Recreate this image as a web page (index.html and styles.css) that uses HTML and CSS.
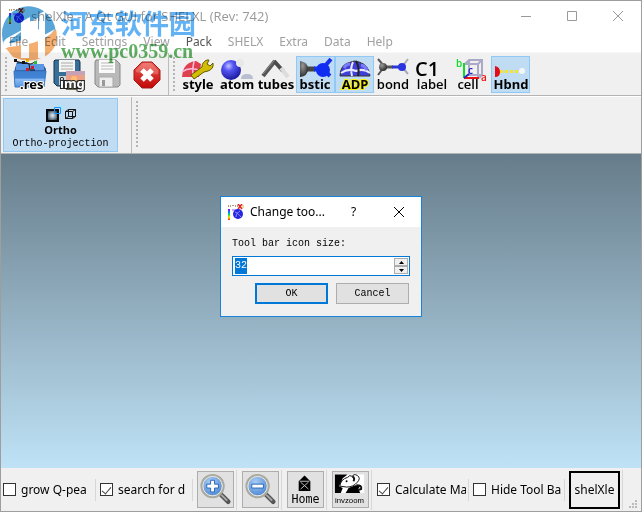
FILE: index.html
```html
<!DOCTYPE html>
<html lang="en">
<head>
<meta charset="utf-8">
<title>shelXle - A Qt GUI for SHELXL (Rev: 742)</title>
<link rel="stylesheet" href="styles.css">
</head>
<body>
<svg class="defs" width="0" height="0" aria-hidden="true">
  <defs>
    <linearGradient id="folder" x2="0" y2="1"><stop offset="0" stop-color="#3f7fd0"/><stop offset=".45" stop-color="#4384d6"/><stop offset=".5" stop-color="#8bbcf4"/><stop offset="1" stop-color="#5796e2"/></linearGradient>
    <linearGradient id="red" x2="0" y2="1"><stop offset="0" stop-color="#ee5a52"/><stop offset="1" stop-color="#c00808"/></linearGradient>
    <radialGradient id="blue" cx=".38" cy=".3" r=".7"><stop offset="0" stop-color="#c4c4ff"/><stop offset=".35" stop-color="#5555f4"/><stop offset="1" stop-color="#1b1ba0"/></radialGradient>
    <radialGradient id="grey" cx=".35" cy=".3" r=".8"><stop offset="0" stop-color="#999"/><stop offset="1" stop-color="#222"/></radialGradient>
    <radialGradient id="lens" cx=".4" cy=".3" r=".8"><stop offset="0" stop-color="#a7cbf5"/><stop offset="1" stop-color="#3f7ed0"/></radialGradient>
    <linearGradient id="rainbow" x2="0" y2="1"><stop offset="0" stop-color="#80f"/><stop offset=".3" stop-color="#08f"/><stop offset=".5" stop-color="#0d5"/><stop offset=".75" stop-color="#fd0"/><stop offset="1" stop-color="#f20"/></linearGradient>
    <radialGradient id="square"><stop offset="0" stop-color="#d7e9f5"/><stop offset=".4" stop-color="#a3b6c4"/><stop offset="1" stop-color="#3a4650"/></radialGradient>
    <symbol id="app" viewBox="0 0 16 16">
      <path d="M0 2h4M5 1v2M7 2h3" stroke="#b59b72" stroke-width="2" stroke-dasharray="1 1"/>
      <path d="M10 0l4 5M14 0l-4 5" stroke="#e32020" stroke-width="1.5"/><path d="M15 1v3" stroke="#d5b322"/>
      <path d="M0 5h2v11H0z" fill="url(#rainbow)"/>
      <path d="M4 6h3v5l3 4" stroke="#c8a8ff" stroke-width="2" fill="none"/>
      <circle cx="10" cy="10" r="5" fill="#2626e0"/><path d="M7 8c3 1 4 3 6 5M8 13c0-3 2-5 4-6" fill="none" stroke="#8f90ff"/>
    </symbol>
  </defs>
</svg>
<div class="window">
  <header class="titlebar">
    <svg class="app-icon" aria-hidden="true"><use href="#app"/></svg>
    <h1>shelXle - A Qt GUI for SHELXL (Rev: 742)</h1>
    <div class="caption-buttons">
      <button aria-label="Minimize"><svg width="12" height="12" viewBox="0 0 12 12"><path d="M1 6.500h10"/></svg></button>
      <button aria-label="Maximize"><svg width="12" height="12" viewBox="0 0 12 12"><path d="M1.500 1.500h9v9h-9z"/></svg></button>
      <button aria-label="Close"><svg width="12" height="12" viewBox="0 0 12 12"><path d="M1 1l10 10M11 1L1 11"/></svg></button>
    </div>
  </header>
  <nav class="menubar">
    <a href="#">File</a><a href="#">Edit</a><a href="#">Settings</a><a href="#">View</a><a href="#" class="enabled">Pack</a><a href="#">SHELX</a><a href="#">Extra</a><a href="#">Data</a><a href="#">Help</a>
  </nav>

  <div class="toolbar">
    <div class="group">
      <span class="handle"></span>
      <button class="tool" aria-label="Open res file"><svg viewBox="0 0 39 37">
        <path d="M4 12l2-6h10l2 2h14l3 5v6H3z" fill="#315f9f"/><path d="M5 8h28v6H5z" fill="#5a98e4"/>
        <path d="M3 15h32l-2 16H4z" fill="url(#folder)" stroke="#3b77c2"/>
        <path d="M4 5l8 2 8 1 6-3M18 8l1 6h5" fill="none" stroke="#111"/><path d="M3 3h3v3H3zM11 5h3v3h-3z" fill="#111"/><path d="M15 3h3v3h-3z" fill="#eed100"/><path d="M23 5h3v3h-3z" fill="#2bbd37"/><path d="M15 12h3v3h-3zM20 10h3v3h-3z" fill="#d81820"/>
        <text x="9" y="33" class="outlined dark">.res</text></svg></button>
      <button class="tool" aria-label="Save image"><svg viewBox="0 0 39 37">
        <path d="M5 4h24l1 2v24H7l-3-3V5z" fill="#376f98" stroke="#17344b"/><path d="M9 4h16v12H9z" fill="#f5f5f3"/><path d="M11 7h12M11 10h12M11 13h12" stroke="#aaa"/><path d="M9 20h14v9H9z" fill="#ccd5db"/>
        <path d="M16 15h19v11H16z" fill="#e9a086"/><path d="M16 15h19v4H16z" fill="#c7a1b4"/><path d="M16 24h19v10H16z" fill="#746b50"/><circle cx="24" cy="23" r="3" fill="#ffbd70"/>
        <text x="10" y="32" class="outlined light">img</text></svg></button>
      <button class="tool" aria-label="Save" disabled><svg viewBox="0 0 39 37">
        <path d="M7 4h20l4 4v21l-2 2H9l-3-3V6z" fill="#b9b9b9" stroke="#888"/><path d="M10 4h16v13H10z" fill="#fafafa"/><path d="M12 7h12M12 10h12M12 13h12" stroke="#b8b8b8"/><path d="M10 21h14v10H10z" fill="#eee" stroke="#aaa"/><path d="M13 24h3v6h-3z" fill="#999"/></svg></button>
      <button class="tool" aria-label="Stop"><svg viewBox="0 0 39 37">
        <path d="M14 6h10l8 8v10l-8 8H14l-8-8V14z" fill="url(#red)" stroke="#a51a17"/><path d="M15 7h8l7 7v4q-12 1-22-2v-2z" fill="#fff" opacity=".2"/><path d="M14 14l10 10M24 14L14 24" stroke="#fff" stroke-width="5"/></svg></button>
    </div>
    <div class="group">
      <span class="handle"></span>
      <button class="tool" aria-label="Style"><svg viewBox="0 0 39 37">
        <path d="M3 21Q4 6 17 5l5 3-2 13z" fill="#df4050"/><path d="M3 16Q11 10 22 15M15 5q-2 8-1 15" fill="none" stroke="#fbd" stroke-width="1.5"/>
        <path d="M12 19l11-8q0-5 5-7h2l-2 4 3 2 3-3q1 6-5 8l-4 1-10 7z" fill="#d2bd05" stroke="#645900"/>
        <text x="19" y="33" text-anchor="middle">style</text></svg></button>
      <button class="tool" aria-label="Atom"><svg viewBox="0 0 39 37">
        <circle cx="13" cy="14" r="10" fill="url(#blue)"/><circle cx="22" cy="7" r="4" fill="#e8e8e8"/><path d="M23 23q0-5 6-5t6 5z" fill="#b9bed0"/>
        <text x="19" y="33" text-anchor="middle">atom</text></svg></button>
      <button class="tool" aria-label="Tubes"><svg viewBox="0 0 39 37">
        <path d="M6 20L18 5" stroke="#555" stroke-width="4"/><path d="M17 5l9 10" stroke="#4b4b4b" stroke-width="4"/><path d="M24 12l7 9" stroke="#dcdcdc" stroke-width="4"/><path d="M6 18L17 5" stroke="#888"/>
        <text x="19" y="33" text-anchor="middle">tubes</text></svg></button>
      <button class="tool on" aria-label="Ball and stick"><svg viewBox="0 0 39 37">
        <path d="M8 13h11" stroke="#454545" stroke-width="5"/><path d="M18 13h11" stroke="#1530ed" stroke-width="5"/><path d="M29 10l6-7M29 15l5 5" stroke="#1530ed" stroke-width="4"/><path d="M4 5q8 1 8 8t-8 8z" fill="url(#grey)"/><circle cx="27" cy="14" r="7" fill="#102cf0"/>
        <text x="19" y="33" text-anchor="middle">bstic</text></svg></button>
      <button class="tool on" aria-label="ADP"><svg viewBox="0 0 39 37">
        <path d="M5 20Q5 8 16 6q3-2 8 0 10 3 11 14z" fill="#3f3fd8" stroke="#333"/><path d="M6 17q7-5 15-2 8-3 14 2M18 6q-3 6-1 14" fill="none" stroke="#e8e8ff" stroke-width="2"/><path d="M21 5q4 7 2 15" fill="none" stroke="#222" stroke-width="2"/><path d="M9 12q2-4 6-4M26 9q4 1 6 5" fill="none" stroke="#7b7bff" stroke-width="3"/>
        <text x="20" y="33" text-anchor="middle" class="yellow">ADP</text></svg></button>
      <button class="tool" aria-label="Bond"><svg viewBox="0 0 39 37">
        <path d="M4 3l6 7M4 19l6-8" stroke="#555" stroke-width="2"/><path d="M10 11h9" stroke="#555" stroke-width="3"/><path d="M18 11h12" stroke="#2838d8" stroke-width="3"/><path d="M28 11l6-8M29 12l5 6" stroke="#aab" stroke-width="2"/><circle cx="9" cy="11" r="4" fill="url(#grey)"/><circle cx="28" cy="11" r="4" fill="#2a35e0"/>
        <text x="19" y="33" text-anchor="middle" class="medium">bond</text></svg></button>
      <button class="tool" aria-label="Label"><svg viewBox="0 0 39 37">
        <text x="2" y="20" class="large">C1</text><text x="19" y="33" text-anchor="middle" class="medium">label</text></svg></button>
      <button class="tool" aria-label="Cell"><svg viewBox="0 0 39 37">
        <path d="M13 8l4-4h13v15l-3 3M17 4v15h13M26 8l4-4M13 8h13v14" fill="none" stroke="#aaaac8" stroke-width="2"/><path d="M12 7v15" stroke="#0cdc27" stroke-width="2"/><path d="M12 22h15" stroke="#e11" stroke-width="2"/><path d="M12 22l5-4" stroke="#22c" stroke-width="2"/>
        <text x="4" y="11" class="axis green">b</text><text x="16" y="18" class="axis blue">c</text><text x="29" y="25" class="axis red">a</text><text x="16" y="33" text-anchor="middle" class="medium">cell</text></svg></button>
      <button class="tool on" aria-label="Hydrogen bond"><svg viewBox="0 0 39 37">
        <path d="M4 10q5 1 5 6t-5 5z" fill="#e30c18"/><path d="M9 15.500h19" stroke="#f4e52a" stroke-width="3" stroke-dasharray="3 2"/><circle cx="31" cy="15" r="3" fill="#f4f6fb"/>
        <text x="20" y="33" text-anchor="middle">Hbnd</text></svg></button>
    </div>
  </div>

  <div class="toolbar second">
    <div class="projection">
      <button class="ortho">
        <svg width="32" height="18" viewBox="0 0 32 18" aria-hidden="true"><path d="M13 1h4v3" fill="none" stroke="#8df1ff"/><path d="M2 5h11v11H2z" fill="url(#square)" stroke="#05080b" stroke-width="2"/><path d="M9.500 2.500h6v6h-3" fill="none" stroke="#1893ff"/><path d="M9.500 2.500v6h4" fill="none" stroke="#1893ff"/><path d="M20.500 6.500h7v7h-7zM20.500 6.500l3-2h7v7l-3 2M27.500 6.500l3-2M23.500 4.500v7h7M23.500 11.500l-3 2" fill="none" stroke="#111"/></svg>
        <b>Ortho</b><span>Ortho-projection</span>
      </button>
    </div>
    <div class="rest"><span class="handle"></span></div>
  </div>

  <main class="canvas">
    <section class="dialog" role="dialog" aria-labelledby="dialog-title">
      <div class="dialog-title">
        <svg class="app-icon" aria-hidden="true"><use href="#app"/></svg>
        <h2 id="dialog-title">Change too...</h2>
        <button aria-label="Help">?</button>
        <button aria-label="Close dialog"><svg width="12" height="12" viewBox="0 0 12 12"><path d="M1 1l10 10M11 1L1 11"/></svg></button>
      </div>
      <form class="dialog-body">
        <label for="size">Tool bar icon size:</label>
        <div class="spin">
          <input id="size" type="text" inputmode="numeric" value="32">
          <div class="steps">
            <button type="button" aria-label="Increase"><svg width="5" height="3" viewBox="0 0 5 3"><path d="M0 3l2.500-3L5 3z"/></svg></button>
            <button type="button" aria-label="Decrease"><svg width="5" height="3" viewBox="0 0 5 3"><path d="M0 0h5L2.500 3z"/></svg></button>
          </div>
        </div>
        <div class="actions"><button type="button" class="default">OK</button><button type="button">Cancel</button></div>
      </form>
    </section>
  </main>

  <footer class="statusbar">
    <label class="cell"><input type="checkbox"><span>grow Q-pea</span></label>
    <label class="cell"><input type="checkbox" checked><span>search for d</span></label>
    <div class="cell tall"><button class="view" aria-label="Zoom in"><svg viewBox="0 0 36 35"><path d="M23 22l8 8" stroke="#555" stroke-width="5" stroke-linecap="round"/><path d="M24 23l6 6" stroke="#aaa" stroke-width="2"/><circle cx="15" cy="14" r="11" fill="url(#lens)" stroke="#aaa99f" stroke-width="3"/><circle cx="15" cy="14" r="10" fill="none" stroke="#e9eeee"/><path d="M13 8h4v4h4v4h-4v4h-4v-4H9v-4h4z" fill="#fff" stroke="#2868b4"/></svg></button></div>
    <div class="cell tall"><button class="view" aria-label="Zoom out"><svg viewBox="0 0 36 35"><path d="M23 22l8 8" stroke="#555" stroke-width="5" stroke-linecap="round"/><path d="M24 23l6 6" stroke="#aaa" stroke-width="2"/><circle cx="15" cy="14" r="11" fill="url(#lens)" stroke="#aaa99f" stroke-width="3"/><circle cx="15" cy="14" r="10" fill="none" stroke="#e9eeee"/><path d="M9 12h12v4H9z" fill="#fff" stroke="#2868b4"/></svg></button></div>
    <div class="cell tall"><button class="view" aria-label="Home"><svg viewBox="0 0 36 35"><path d="M11 9l6-6 6 6v10H11z"/><path d="M13 10l8 7M21 10l-8 7M12 9h10" stroke="#bbb" fill="none"/><text x="18" y="31" text-anchor="middle" class="home">Home</text></svg></button></div>
    <div class="cell tall"><button class="view" aria-label="Invert zoom"><svg viewBox="0 0 36 35"><path d="M2 2h30v19H2z" fill="#fff"/><path d="M2 2h13l-5 4-2 5-2 3 4 2-2 5H2zM13 21l3-5 7-3 5 1-2 3 2 4z"/><path d="M7 14q1-7 8-9 2-3 5-1 1-3 5-1 4 3 0 7-4 5-11 5z" fill="#fff" stroke="#111"/><circle cx="14" cy="9" r="1"/><path d="M20 4q3 2 1 5M24 13q6 0 5 4l-3 1" fill="none" stroke="#111" stroke-width="2"/><text x="17" y="31" text-anchor="middle" class="inv">invzoom</text></svg></button></div>
    <label class="cell wide"><input type="checkbox" checked><span>Calculate Ma</span></label>
    <label class="cell wide"><input type="checkbox"><span>Hide Tool Ba</span></label>
    <div class="cell tall"><button class="brand">shelXle</button></div>
    <svg class="grip" width="9" height="9" viewBox="0 0 9 9" aria-hidden="true"><path d="M6 0h2v2H6zM3 3h2v2H3zM6 3h2v2H6zM0 6h2v2H0zM3 6h2v2H3zM6 6h2v2H6z" fill="#bbb"/></svg>
  </footer>
</div>

<div class="watermark">
  <svg width="56" height="56" viewBox="0 0 56 56" aria-hidden="true">
    <path d="M4 43Q-4 22 9 8Q24-5 41 4Q54 12 55 27Q50 33 37 35V12l-9 4v16L8 38Q5 40 4 43z" fill="#2f8fcf"/>
    <path d="M55 23Q59 42 43 51Q28 58 12 51L3 40l17-5v16h8V36l9-3v19h7V33z" fill="#f09a4c"/>
    <path d="M20 16l9-5v17l9-5V8l6-3v47h-7V33l-9 3v16h-8z" fill="#fff"/>
    <path d="M3 43Q0 34 8 31L30 19Q9 33 8 37q20 2 46-14Q44 38 8 41z" fill="#fff"/>
  </svg>
  <div><strong>河东软件园</strong><em>www.pc0359.cn</em></div>
</div>
<script src="script.js"></script>
</body>
</html>
```
FILE: styles.css
```css
* { box-sizing: border-box; }
body { margin: 0; font: 12px/16px "Noto Sans", "Open Sans", sans-serif; color: #000; }
button, input { font: inherit; color: inherit; margin: 0; padding: 0; border-radius: 0; }
button { background: none; border: 0; display: grid; place-items: center; }
h1, h2 { margin: 0; font-weight: 400; white-space: nowrap; }
.defs { position: absolute; }
.window { display: flex; flex-direction: column; min-height: 100vh; border: 1px solid #9e9e9e; background: #f0f0f0; }
.app-icon { width: 16px; height: 16px; flex: none; }

.titlebar { display: flex; align-items: center; height: 30px; padding-left: 8px; background: #fff; color: #999; }
.titlebar h1 { flex: 1; padding-left: 6px; font: 13px/16px "Open Sans", sans-serif; }
.caption-buttons { display: flex; }
.caption-buttons button { width: 46px; height: 30px; }
.caption-buttons path { fill: none; stroke: #999; }

.menubar { display: flex; height: 22px; background: #fff; align-items: center; border-bottom: 1px solid #f7f7f7; }
.menubar a { padding: 0 8px; color: #a0a0a0; text-decoration: none; }
.menubar .enabled { color: #555; }

.toolbar { display: flex; height: 43px; border-bottom: 1px solid #b4b4b4; }
.group { display: flex; align-items: center; padding: 0 1px 0 4px; }
.group:first-child { border-right: 1px solid #bbb; }
.handle { width: 3px; align-self: stretch; margin: 4px 3px 4px 0; background: radial-gradient(circle at 1px 1px, #b4b4b4 1px, transparent 1px) 0 0 / 3px 4px; }
.tool { width: 39px; height: 37px; border: 1px solid transparent; }
.tool.on, .ortho { background: #c0dcf3; border: 1px solid #90c8f6; }
.tool svg { display: block; width: 39px; height: 37px; margin: -1px; }
.tool text { font: 700 13px "Noto Sans", sans-serif; }
.tool .medium { font: 600 13px "Open Sans", sans-serif; }
.tool .large { font: 600 20px "Open Sans", sans-serif; }
.tool .axis { font: 600 10px "Open Sans", sans-serif; }
.outlined { paint-order: stroke; stroke-width: 2px; }
.dark { stroke: #fff; }
.light { fill: #fff; stroke: #222; }
.yellow { paint-order: stroke; stroke: #fff200; stroke-width: 2px; }
.green { fill: #0cdc27; }
.blue { fill: #22c; }
.red { fill: #e11; }

.second { height: 58px; border-top: 1px solid #fff; }
.projection { width: 131px; padding: 1px 2px 2px; border-right: 1px solid #bbb; }
.ortho { width: 115px; height: 54px; align-content: center; padding-top: 4px; }
.ortho b { font: 700 11px/14px "Open Sans", sans-serif; }
.ortho span { font: 10px/13px "Liberation Mono", monospace; }
.rest { display: flex; padding-left: 4px; }

.canvas { flex: 1; position: relative; background: linear-gradient(#667c8a, #bfe2f6); }
.dialog { position: absolute; top: 42px; left: 50%; transform: translateX(-50%); width: 202px; border: 1px solid #1883d7; background: #f0f0f0; }
.dialog-title { display: flex; align-items: center; height: 30px; padding-left: 7px; background: #fff; }
.dialog-title h2 { flex: 1; padding-left: 6px; font-size: 12px; }
.dialog-title button { width: 45px; height: 30px; }
.dialog-title path { stroke: #000; fill: none; }
.dialog-body { padding: 9px 12px 12px 11px; font: 10px/16px "Liberation Mono", monospace; }
.dialog-body label { display: block; }
.spin { display: flex; height: 20px; margin: 4px -1px 7px 0; padding: 1px; border: 1px solid #0078d7; background: #fff; }
.spin input { flex: 1; min-width: 0; border: 0; outline: 0; background: none; padding: 0 1px; }
.spin input::selection { background: #0078d7; color: #fff; }
.steps { display: grid; width: 14px; }
.steps button { border: 1px solid #acacac; background: #f0f0f0; }
.steps svg { display: block; }
.actions { display: flex; justify-content: flex-end; gap: 8px; }
.actions button { width: 73px; height: 21px; border: 1px solid #adadad; background: #e1e1e1; }
.actions .default { border: 2px solid #0078d7; }

.statusbar { display: flex; align-items: center; height: 43px; padding-left: 2px; }
.cell { display: flex; align-items: center; flex: 0 0 93px; gap: 5px; height: 22px; padding-right: 2px; margin-right: 4px; border-right: 1px solid #d7d7d7; min-width: 0; }
.cell.wide { flex-basis: 92px; }
.cell.tall { flex: none; height: 40px; margin-right: 5px; }
.cell span { overflow: hidden; white-space: nowrap; }
.cell input { appearance: none; flex: none; width: 13px; height: 13px; border: 1px solid #333; background: #fff; display: grid; place-items: center; }
.cell input:checked::after { content: ""; width: 4px; height: 8px; border: solid #444; border-width: 0 1px 1px 0; transform: rotate(40deg); }
.view { width: 37px; height: 37px; border: 1px solid #adadad; background: #e1e1e1; }
.view svg { display: block; width: 35px; height: 35px; }
.home { font: 12px "DejaVu Sans Mono", monospace; }
.inv { font: 8px "Liberation Sans", sans-serif; }
.brand { width: 51px; height: 38px; border: 2px solid #000; }
.grip { align-self: flex-end; margin: 0 3px 2px auto; }

.watermark { position: absolute; top: 6px; left: 1px; display: flex; gap: 4px; pointer-events: none; opacity: .8; mix-blend-mode: multiply; }
.watermark strong { display: block; font: 700 27px/34px "Noto Sans CJK SC", sans-serif; color: #3a9ff2; }
.watermark em { display: block; font: 700 20px/22px "Liberation Serif", serif; color: #389a3c; }
```
FILE: script.js
```js
const size = document.getElementById("size");
size.focus({ preventScroll: true });
size.select();

const [up, down] = document.querySelectorAll(".steps button");
up.addEventListener("click", () => { size.value = Number(size.value) + 1; });
down.addEventListener("click", () => { size.value = Math.max(1, Number(size.value) - 1); });
```
